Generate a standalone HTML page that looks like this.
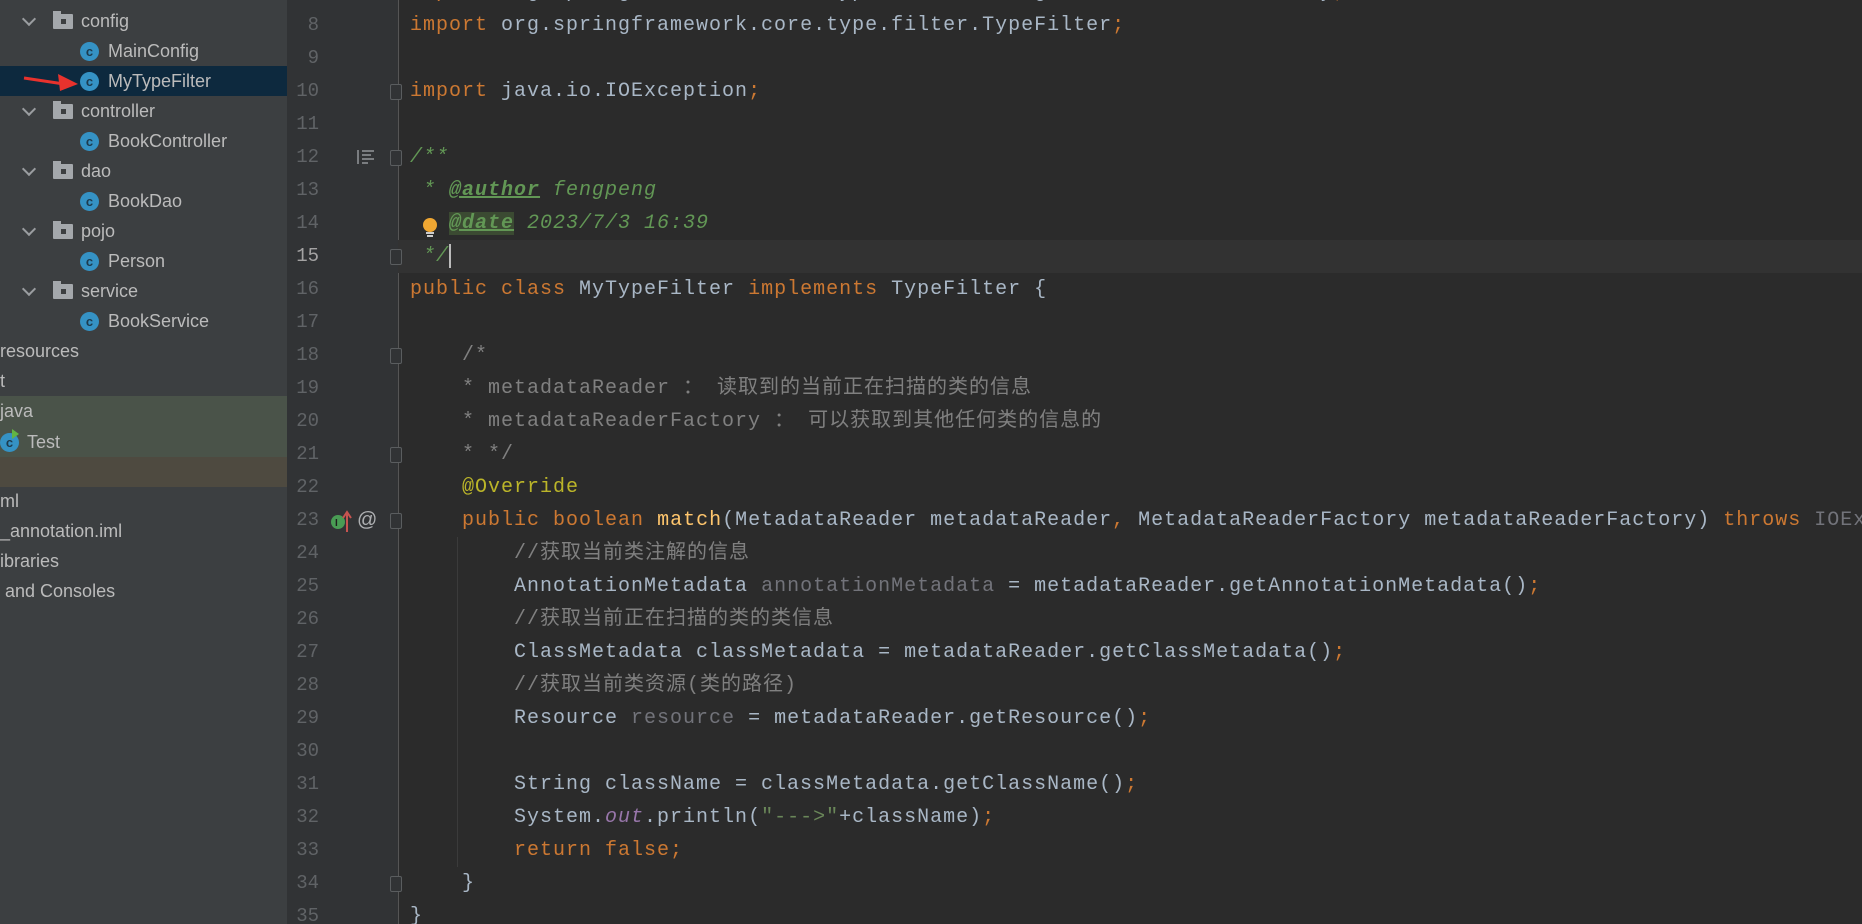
<!DOCTYPE html>
<html style="overflow:hidden"><head><meta charset="utf-8"><style>
html,body{margin:0;width:1862px;height:924px;overflow:hidden}
body{background:#2b2b2b;position:relative;font-family:"Liberation Sans",sans-serif}
#wrap{position:absolute;left:0;top:0;width:1862px;height:924px;overflow:hidden}
#side{position:absolute;left:0;top:0;width:287px;height:924px;background:#3c3f41}
.r{position:absolute;left:0;width:287px;height:30px;line-height:30px;color:#bbbbbb;font-size:18px;white-space:nowrap}
.chev{position:absolute;left:24px;top:8px;width:8px;height:8px;border-right:2px solid #9a9da0;border-bottom:2px solid #9a9da0;transform:rotate(45deg)}
.fold{position:absolute;left:53px;top:8px;width:20px;height:15px;background:#a4a8ac;border-radius:1px}
.fold:before{content:"";position:absolute;left:0;top:-3px;width:8px;height:4px;background:#a4a8ac}
.fold:after{content:"";position:absolute;left:8px;top:5px;width:5px;height:5px;background:#3c3f41}
.ci{position:absolute;top:6px;width:19px;height:19px;border-radius:50%;background:#3592c4;color:#1d3a4d;font-size:13px;line-height:19px;text-align:center;font-weight:bold}
#gut{position:absolute;left:287px;top:0;width:111px;height:924px;background:#313335}
.ln{position:absolute;left:287px;width:32px;text-align:right;color:#606366;font-family:"Liberation Mono",monospace;font-size:19px;height:33px;line-height:33px}
.c{position:absolute;left:410px;height:33px;line-height:33px;white-space:pre;font-family:"Liberation Mono","Noto Sans CJK SC",monospace;font-size:20px;letter-spacing:1px;color:#a9b7c6}
.k{color:#cc7832}.cm{color:#808080}.d{color:#629755;font-style:italic}.dt{color:#629755;font-weight:bold;text-decoration:underline;font-style:italic}.an{color:#bbb529}.g{color:#72737a}.p{color:#9876aa;font-style:italic}.s{color:#6a8759}.y{color:#ffc66d}
.cj{letter-spacing:1px}
.fm{position:absolute;left:390px;width:12px;height:16px;border:1.5px solid #5a5d5f;border-radius:2px;box-sizing:border-box;background:#313335}
</style></head><body><div id="wrap">
<div id="side">
<div class="r" style="top:6px"><span class="chev"></span><span class="fold"></span><span style="position:absolute;left:81px">config</span></div>
<div class="r" style="top:36px"><span class="ci" style="left:80px">c</span><span style="position:absolute;left:108px">MainConfig</span></div>
<div class="r" style="top:66px;background:#0d293e"><svg style="position:absolute;left:22px;top:4px" width="58" height="22"><path d="M2 8 L42 14" stroke="#e8322d" stroke-width="3"/><path d="M36 4 L56 14 L38 21 Z" fill="#e8322d"/></svg><span class="ci" style="left:80px">c</span><span style="position:absolute;left:108px">MyTypeFilter</span></div>
<div class="r" style="top:96px"><span class="chev"></span><span class="fold"></span><span style="position:absolute;left:81px">controller</span></div>
<div class="r" style="top:126px"><span class="ci" style="left:80px">c</span><span style="position:absolute;left:108px">BookController</span></div>
<div class="r" style="top:156px"><span class="chev"></span><span class="fold"></span><span style="position:absolute;left:81px">dao</span></div>
<div class="r" style="top:186px"><span class="ci" style="left:80px">c</span><span style="position:absolute;left:108px">BookDao</span></div>
<div class="r" style="top:216px"><span class="chev"></span><span class="fold"></span><span style="position:absolute;left:81px">pojo</span></div>
<div class="r" style="top:246px"><span class="ci" style="left:80px">c</span><span style="position:absolute;left:108px">Person</span></div>
<div class="r" style="top:276px"><span class="chev"></span><span class="fold"></span><span style="position:absolute;left:81px">service</span></div>
<div class="r" style="top:306px"><span class="ci" style="left:80px">c</span><span style="position:absolute;left:108px">BookService</span></div>
<div class="r" style="top:336px"><span style="position:absolute;left:0">resources</span></div>
<div class="r" style="top:366px"><span style="position:absolute;left:0">t</span></div>
<div class="r" style="top:396px;height:31px;background:#4a5349"><span style="position:absolute;left:0">java</span></div>
<div class="r" style="top:427px;background:#4a5349"><span class="ci" style="left:0">c</span><span style="position:absolute;left:12px;top:2px;width:0;height:0;border-left:7px solid #62b543;border-top:5px solid transparent;border-bottom:5px solid transparent"></span><span style="position:absolute;left:27px">Test</span></div>
<div class="r" style="top:457px;background:#4e4a40"></div>
<div class="r" style="top:486px"><span style="position:absolute;left:0">ml</span></div>
<div class="r" style="top:516px"><span style="position:absolute;left:0">_annotation.iml</span></div>
<div class="r" style="top:546px"><span style="position:absolute;left:0">ibraries</span></div>
<div class="r" style="top:576px"><span style="position:absolute;left:0">&nbsp;and Consoles</span></div>
</div>
<div id="gut"></div>
<div style="position:absolute;left:398px;top:0;width:1px;height:924px;background:#555"></div>
<div style="position:absolute;left:398px;top:240px;width:1464px;height:33px;background:#323232"></div>
<div style="position:absolute;left:457px;top:537px;width:1px;height:330px;background:#3b3b3b"></div>

<div class="ln" style="top:-24px">7</div><div class="ln" style="top:9px">8</div><div class="ln" style="top:42px">9</div><div class="ln" style="top:75px">10</div><div class="ln" style="top:108px">11</div><div class="ln" style="top:141px">12</div><div class="ln" style="top:174px">13</div><div class="ln" style="top:207px">14</div><div class="ln" style="top:240px;color:#a4a3a3">15</div><div class="ln" style="top:273px">16</div><div class="ln" style="top:306px">17</div><div class="ln" style="top:339px">18</div><div class="ln" style="top:372px">19</div><div class="ln" style="top:405px">20</div><div class="ln" style="top:438px">21</div><div class="ln" style="top:471px">22</div><div class="ln" style="top:504px">23</div><div class="ln" style="top:537px">24</div><div class="ln" style="top:570px">25</div><div class="ln" style="top:603px">26</div><div class="ln" style="top:636px">27</div><div class="ln" style="top:669px">28</div><div class="ln" style="top:702px">29</div><div class="ln" style="top:735px">30</div><div class="ln" style="top:768px">31</div><div class="ln" style="top:801px">32</div><div class="ln" style="top:834px">33</div><div class="ln" style="top:867px">34</div><div class="ln" style="top:900px">35</div>

<div class="fm" style="top:84px"></div><div class="fm" style="top:150px"></div><div class="fm" style="top:249px"></div><div class="fm" style="top:348px"></div><div class="fm" style="top:447px"></div><div class="fm" style="top:513px"></div><div class="fm" style="top:876px"></div>
<svg style="position:absolute;left:357px;top:149px" width="18" height="16"><path d="M1 1V15M5 2H17M5 6H14M5 10H17M5 14H11" stroke="#7a7d80" stroke-width="2"/></svg>
<svg style="position:absolute;left:421px;top:217px" width="18" height="22"><circle cx="9" cy="8" r="7" fill="#f0a732"/><rect x="5" y="15" width="8" height="2" fill="#ccc"/><rect x="6" y="18" width="6" height="2" fill="#ccc"/></svg>
<svg style="position:absolute;left:330px;top:510px" width="22" height="24"><circle cx="8" cy="12" r="7" fill="#499c54"/><text x="5" y="16" font-size="10" font-family="Liberation Sans" fill="#1e1e1e" font-weight="bold">I</text><path d="M17 22V4M13 8L17 2L21 8" stroke="#c75450" stroke-width="2" fill="none"/></svg>
<div style="position:absolute;left:357px;top:504px;height:33px;line-height:33px;color:#aeb0b2;font-size:20px">@</div>

<div class="c" style="top:-24px"><span class="k">import</span> org.springframework.core.type.classreading.MetadataReaderFactory<span class="k">;</span></div>
<div class="c" style="top:9px"><span class="k">import</span> org.springframework.core.type.filter.TypeFilter<span class="k">;</span></div>
<div class="c" style="top:75px"><span class="k">import</span> java.io.IOException<span class="k">;</span></div>
<div class="c" style="top:141px"><span class="d">/**</span></div>
<div class="c" style="top:174px"><span class="d"> * </span><span class="dt">@author</span><span class="d"> fengpeng</span></div>
<div class="c" style="top:207px"><span class="d">   </span><span class="dt" style="background:#3b4a32">@date</span><span class="d"> 2023/7/3 16:39</span></div>
<div class="c" style="top:240px"><span class="d"> */</span><span style="display:inline-block;width:2px;height:24px;background:#bbb;vertical-align:middle"></span></div>
<div class="c" style="top:273px"><span class="k">public class</span> MyTypeFilter <span class="k">implements</span> TypeFilter {</div>
<div class="c cm" style="top:339px">    /*</div>
<div class="c cm" style="top:372px">    * metadataReader <span class="cj">： 读取到的当前正在扫描的类的信息</span></div>
<div class="c cm" style="top:405px">    * metadataReaderFactory <span class="cj">： 可以获取到其他任何类的信息的</span></div>
<div class="c cm" style="top:438px">    * */</div>
<div class="c an" style="top:471px">    @Override</div>
<div class="c" style="top:504px">    <span class="k">public boolean</span> <span class="y">match</span>(MetadataReader metadataReader<span class="k">,</span> MetadataReaderFactory metadataReaderFactory) <span class="k">throws</span> <span class="g">IOEx</span></div>
<div class="c cm" style="top:537px">        //<span class="cj">获取当前类注解的信息</span></div>
<div class="c" style="top:570px">        AnnotationMetadata <span class="g">annotationMetadata</span> = metadataReader.getAnnotationMetadata()<span class="k">;</span></div>
<div class="c cm" style="top:603px">        //<span class="cj">获取当前正在扫描的类的类信息</span></div>
<div class="c" style="top:636px">        ClassMetadata classMetadata = metadataReader.getClassMetadata()<span class="k">;</span></div>
<div class="c cm" style="top:669px">        //<span class="cj">获取当前类资源(类的路径)</span></div>
<div class="c" style="top:702px">        Resource <span class="g">resource</span> = metadataReader.getResource()<span class="k">;</span></div>
<div class="c" style="top:768px">        String className = classMetadata.getClassName()<span class="k">;</span></div>
<div class="c" style="top:801px">        System.<span class="p">out</span>.println(<span class="s">"---&gt;"</span>+className)<span class="k">;</span></div>
<div class="c" style="top:834px">        <span class="k">return false;</span></div>
<div class="c" style="top:867px">    }</div>
<div class="c" style="top:900px">}</div>
</div></body></html>
